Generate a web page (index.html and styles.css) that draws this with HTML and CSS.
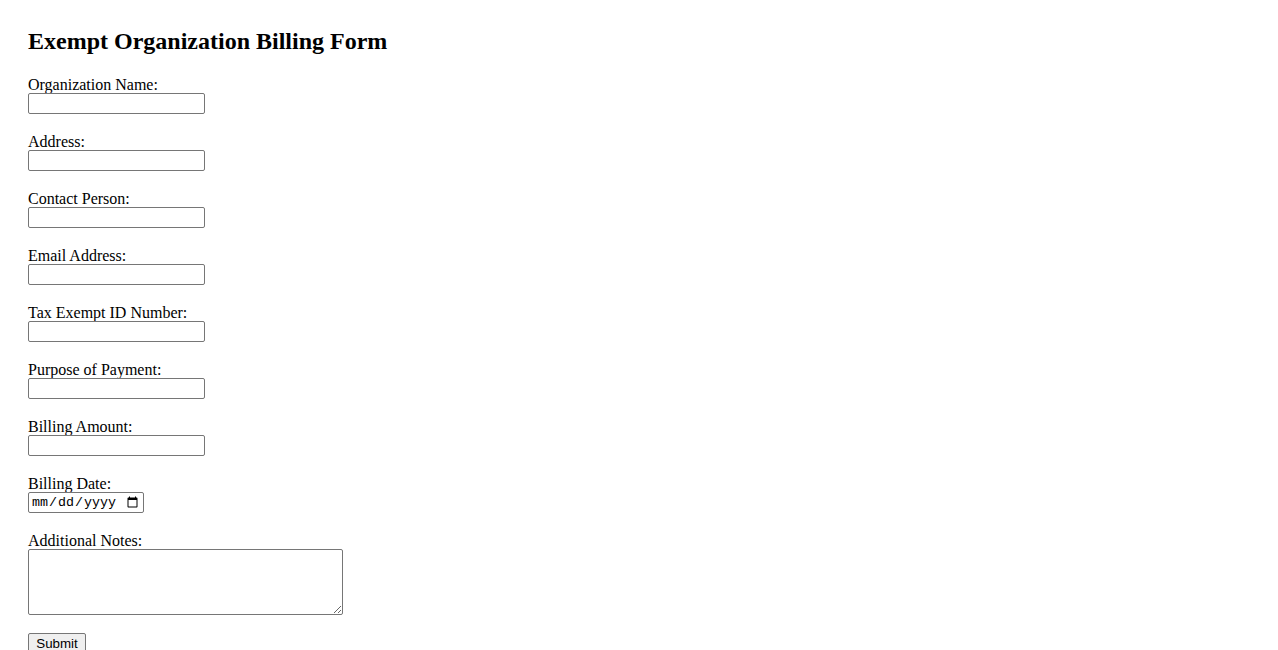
FILE: index.html
```html
<!DOCTYPE html>
<html lang="en">
<head>
<meta charset="utf-8">
<title>Exempt Organization Billing Form</title>
<link rel="stylesheet" href="styles.css">
</head>
<body>
<div class="page">
  <h2 class="title">Exempt Organization Billing Form</h2>
  <form class="form">
    <div class="field"><label class="label" for="org">Organization Name:</label><input class="text" type="text" id="org"></div>
    <div class="field"><label class="label" for="addr">Address:</label><input class="text" type="text" id="addr"></div>
    <div class="field"><label class="label" for="contact">Contact Person:</label><input class="text" type="text" id="contact"></div>
    <div class="field"><label class="label" for="email">Email Address:</label><input class="text" type="email" id="email"></div>
    <div class="field"><label class="label" for="taxid">Tax Exempt ID Number:</label><input class="text" type="text" id="taxid"></div>
    <div class="field"><label class="label" for="purpose">Purpose of Payment:</label><input class="text" type="text" id="purpose"></div>
    <div class="field"><label class="label" for="amount">Billing Amount:</label><input class="text" type="text" id="amount"></div>
    <div class="field"><label class="label" for="date">Billing Date:</label><input class="date" type="date" id="date"></div>
    <div class="field"><label class="label" for="notes">Additional Notes:</label><textarea class="notes" id="notes" rows="4"></textarea></div>
    <div class="field"><button class="submit" type="submit">Submit</button></div>
  </form>
</div>
</body>
</html>
```
FILE: styles.css
```css
html, body {
  margin: 0;
  padding: 0;
  background: #ffffff;
}
body {
  font-family: "Liberation Serif", "Times New Roman", serif;
  font-size: 16px;
  color: #000000;
}
.page {
  padding: 28px 28px 0 28px;
}
.title {
  margin: 0 0 20px 0;
  font-size: 24px;
  line-height: 27px;
  font-weight: bold;
}
.form {
  display: flex;
  flex-direction: column;
  align-items: flex-start;
  gap: 18px;
}
.field {
  display: flex;
  flex-direction: column;
  align-items: flex-start;
}
.label {
  display: block;
  line-height: 20px;
  margin-bottom: -2px;
}
.text {
  box-sizing: border-box;
  width: 177px;
  height: 21px;
  margin: 0;
  padding: 1px 2px;
  border: 1px solid #767676;
  border-radius: 2px;
  font-family: "Liberation Sans", Arial, sans-serif;
  font-size: 13.333px;
}
.date {
  box-sizing: border-box;
  width: 116px;
  height: 21px;
  margin: 0;
  padding: 1px 2px;
  border: 1px solid #767676;
  border-radius: 2px;
  font-family: "Liberation Mono", "Courier New", monospace;
  font-size: 13.333px;
}
.notes {
  box-sizing: border-box;
  width: 315px;
  height: 66px;
  margin: 0;
  padding: 2px;
  border: 1px solid #767676;
  border-radius: 2px;
  font-family: "Liberation Mono", "Courier New", monospace;
  font-size: 13.333px;
}
.submit {
  box-sizing: border-box;
  width: 58px;
  height: 21px;
  margin: 0;
  padding: 1px 6px;
  border: 1px solid #767676;
  border-radius: 2px;
  background: #efefef;
  font-family: "Liberation Sans", Arial, sans-serif;
  font-size: 13.333px;
  color: #000000;
}
```
